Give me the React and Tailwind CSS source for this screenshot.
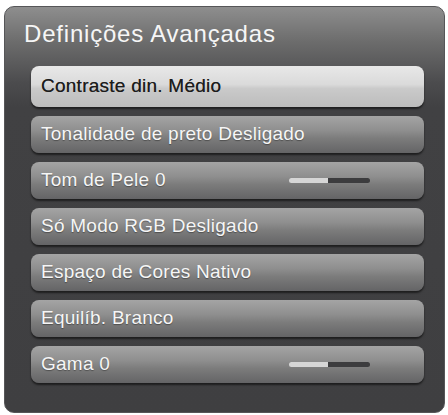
import React from "react";

const items = [
  { label: "Contraste din. Médio", selected: true },
  { label: "Tonalidade de preto Desligado" },
  { label: "Tom de Pele 0", slider: true },
  { label: "Só Modo RGB Desligado" },
  { label: "Espaço de Cores Nativo" },
  { label: "Equilíb. Branco" },
  { label: "Gama 0", slider: true },
];

const Slider = () => (
  <div className="ml-auto mr-[54px] flex h-[5px] w-[81px] overflow-hidden rounded-full">
    <div className="w-[39px] bg-[#d6d6d6]"></div>
    <div className="flex-1 bg-[#3c3c3e]"></div>
  </div>
);

const MenuRow = ({ item }) => {
  if (item.selected) {
    return (
      <div className="flex h-[41px] items-center rounded-[8px] bg-[linear-gradient(to_bottom,#e8e8e8_0%,#dadada_45%,#cacaca_55%,#bcbcbc_100%)] pl-[10px] shadow-[0_2px_2px_rgba(0,0,0,0.55)]">
        <span className="text-[19px] tracking-[0.25px] text-[#1c1c1c] [text-shadow:0_0_0.4px_rgba(0,0,0,0.6)]">
          {item.label}
        </span>
      </div>
    );
  }
  return (
    <div className="flex h-[37px] items-center rounded-[8px] bg-[linear-gradient(to_bottom,#a4a4a4_0%,#8e8e8e_40%,#7c7c7c_60%,#646466_100%)] pl-[10px] shadow-[0_2px_2px_rgba(0,0,0,0.55)]">
      <span className="text-[19px] tracking-[0.25px] text-[#f6f6f6] [text-shadow:0_1px_1px_rgba(0,0,0,0.35)]">
        {item.label}
      </span>
      {item.slider && <Slider />}
    </div>
  );
};

export default function App() {
  return (
    <div className="h-[415px] w-[448px] bg-white pl-[4px] pt-[6px] font-['Liberation_Sans',Helvetica,Arial,sans-serif]">
      <div className="h-[407px] w-[441px] rounded-[10px] border border-[#565658] bg-[linear-gradient(to_bottom,#8e8e8e_0px,#6c6c6c_35px,#4c4c4e_75px,#414143_100px,#3f3f41_100%)] pt-[13px]">
        <h1 className="pl-[19px] text-[24px] leading-[28px] tracking-[0.8px] text-[#f6f6f6]">
          Definições Avançadas
        </h1>
        <div className="mt-[18px] flex flex-col gap-[9px] pl-[26px] pr-[20px]">
          {items.map((item) => (
            <MenuRow key={item.label} item={item} />
          ))}
        </div>
      </div>
    </div>
  );
}
